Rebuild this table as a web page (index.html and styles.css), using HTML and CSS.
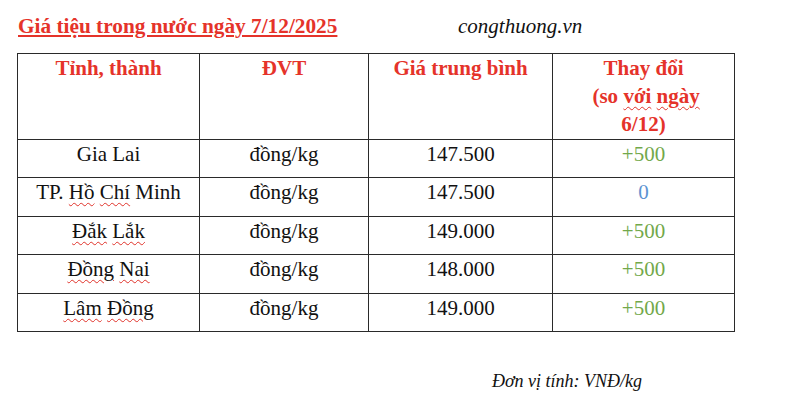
FILE: index.html
```html
<!DOCTYPE html>
<html lang="vi">
<head>
<meta charset="utf-8">
<title>Giá tiệu trong nước ngày 7/12/2025</title>
<link rel="stylesheet" href="styles.css">
</head>
<body>
<div class="page">
  <div class="top">
    <div class="title">Giá tiệu trong nước ngày 7/12/2025</div>
    <div class="source">congthuong.vn</div>
  </div>
  <table class="prices">
    <colgroup>
      <col class="c1"><col class="c2"><col class="c3"><col class="c4">
    </colgroup>
    <thead>
      <tr class="head">
        <th>Tỉnh, thành</th>
        <th>ĐVT</th>
        <th>Giá trung bình</th>
        <th>Thay đổi<br>&nbsp;(so <span class="sp">với</span> <span class="sp">ngày</span><br>6/12)</th>
      </tr>
    </thead>
    <tbody>
      <tr>
        <td>Gia Lai</td><td>đồng/kg</td><td>147.500</td><td class="up">+500</td>
      </tr>
      <tr>
        <td>TP. <span class="sp">Hồ</span> <span class="sp">Chí</span> Minh</td><td>đồng/kg</td><td>147.500</td><td class="zero">0</td>
      </tr>
      <tr>
        <td><span class="sp">Đắk</span> <span class="sp">Lắk</span></td><td>đồng/kg</td><td>149.000</td><td class="up">+500</td>
      </tr>
      <tr>
        <td><span class="sp">Đồng</span> <span class="sp">Nai</span></td><td>đồng/kg</td><td>148.000</td><td class="up">+500</td>
      </tr>
      <tr>
        <td><span class="sp">Lâm</span> <span class="sp">Đồng</span></td><td>đồng/kg</td><td>149.000</td><td class="up">+500</td>
      </tr>
    </tbody>
  </table>
  <div class="note">Đơn vị tính: VNĐ/kg</div>
</div>
</body>
</html>
```

FILE: styles.css
```css
html, body {
  margin: 0;
  padding: 0;
  background: #ffffff;
}

.page {
  font-family: "Liberation Serif", "Times New Roman", serif;
  color: #111111;
  width: 800px;
  height: 403px;
  overflow: hidden;
}

.top {
  display: grid;
  grid-template-columns: 440px auto;
  padding: 12px 0 0 18px;
  line-height: 28px;
  height: 41px;
  box-sizing: border-box;
}

.title {
  color: #e5332a;
  font-weight: bold;
  font-size: 21.3px;
  text-decoration: underline;
  text-decoration-thickness: 1.5px;
  text-underline-offset: 2px;
}

.source {
  font-style: italic;
  font-size: 21px;
  color: #111111;
}

.prices {
  margin: 12px 0 0 17px;
  border-collapse: collapse;
  table-layout: fixed;
  width: 717px;
  font-size: 21px;
  line-height: 28px;
}

.c1 { width: 182px; }
.c2 { width: 169px; }
.c3 { width: 184px; }
.c4 { width: 182px; }

.prices th,
.prices td {
  border: 1px solid #2a2a2a;
  padding: 0;
  text-align: center;
  vertical-align: top;
}

.prices th {
  color: #e5332a;
  font-weight: bold;
}

.head {
  height: 86px;
}

.prices tbody tr {
  height: 38.4px;
}

.up {
  color: #72a84a;
}

.zero {
  color: #5d93d1;
}

.sp {
  text-decoration: underline wavy #e0322a;
  text-decoration-thickness: 1px;
  text-underline-offset: 3px;
}

.note {
  margin-top: 37px;
  padding-left: 492px;
  font-style: italic;
  font-size: 18px;
  line-height: 24px;
}
```
